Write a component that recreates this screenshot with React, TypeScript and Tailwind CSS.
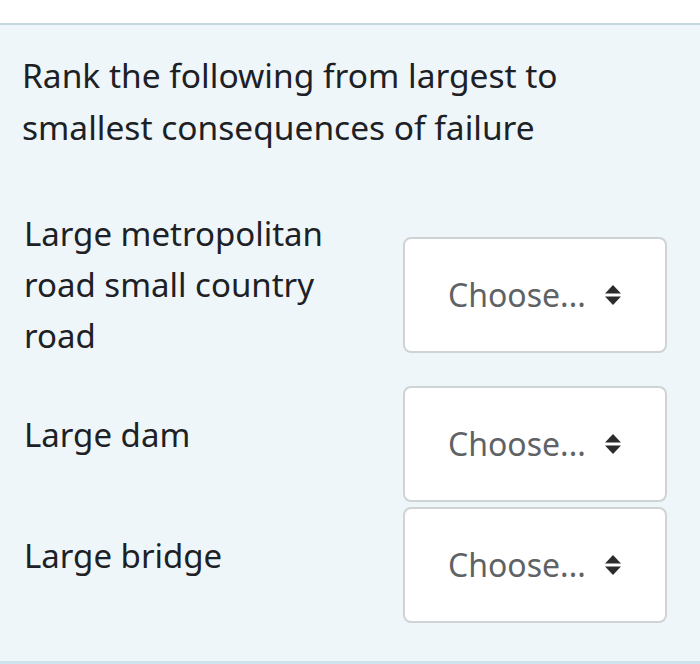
import React from "react";

const rows = [
  { label: "Large metropolitan road small country road" },
  { label: "Large dam" },
  { label: "Large bridge" },
];

function SortIcon() {
  return (
    <svg width="16" height="20" viewBox="0 0 16 20" className="shrink-0">
      <path d="M8 0 L16 8.5 L0 8.5 Z" fill="#2b2b2b" />
      <path d="M0 11.5 L16 11.5 L8 20 Z" fill="#2b2b2b" />
    </svg>
  );
}

function ChooseSelect() {
  return (
    <div className="flex h-[116px] w-[264px] shrink-0 items-center justify-between rounded-[8px] border-2 border-[#d0d3d4] bg-white pl-[43px] pr-[44px]">
      <span className="text-[32px] text-[#606366]">Choose...</span>
      <SortIcon />
    </div>
  );
}

export default function App() {
  return (
    <div className="h-[664px] w-[700px] bg-white font-['Noto_Sans',sans-serif]">
      <div className="h-[23px] bg-white"></div>
      <div className="flex h-[641px] flex-col border-t-2 border-b-[3px] border-t-[#c3d7df] border-b-[#cde4ec] bg-[#eef6f9] pt-[24px]">
        <p className="pl-[22px] pr-6 text-[33.5px] leading-[52px] text-[#1d2125]">
          Rank the following from largest to smallest consequences of failure
        </p>
        <div className="mt-[55px] flex flex-col gap-[5px]">
          {rows.map((r) => (
            <div key={r.label} className="flex items-center pl-[24px] pr-[33px]">
              <div className="w-[330px] pb-5 text-[33px] leading-[51px] text-[#1d2125]">
                {r.label}
              </div>
              <div className="ml-auto">
                <ChooseSelect />
              </div>
            </div>
          ))}
        </div>
      </div>
    </div>
  );
}
